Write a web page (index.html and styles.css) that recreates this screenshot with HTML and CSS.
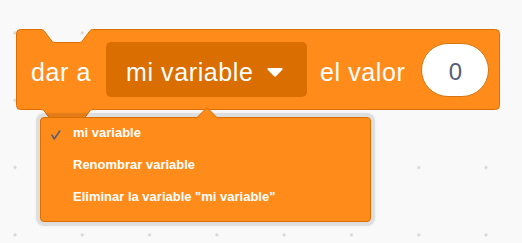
FILE: index.html
```html
<!DOCTYPE html>
<html lang="es">
<head>
<meta charset="utf-8">
<title>Bloque dar a</title>
<link rel="stylesheet" href="styles.css">
</head>
<body>
<div class="workspace">
  <div class="block">
    <svg class="block-shape" width="484" height="100" viewBox="0 0 484 100">
      <path d="M0.5 4.5 A4 4 0 0 1 4.5 0.5 H25 C27 0.5 28 1.5 29 3 L35 11 C36 12.5 37 13.5 39 13.5 H63 C65 13.5 66 12.5 67 11 L73 3 C74 1.5 75 0.5 77 0.5 H479.5 A4 4 0 0 1 483.5 4.5 V76.5 A4 4 0 0 1 479.5 80.5 H77 C75 80.5 74 81.5 73 83 L67 91 C66 92.5 65 93.5 63 93.5 H39 C37 93.5 36 92.5 35 91 L29 83 C28 81.5 27 80.5 25 80.5 H4.5 A4 4 0 0 1 0.5 76.5 Z"/>
    </svg>
    <span class="label">dar a</span>
    <div class="dropdown">
      <span class="dd-text">mi variable</span>
      <svg class="dd-arrow" width="16" height="10" viewBox="0 0 16 10"><path d="M1.5 1 H14.5 C15.6 1 16 2 15.3 2.8 L9.2 9 C8.5 9.7 7.5 9.7 6.8 9 L0.7 2.8 C0 2 0.4 1 1.5 1 Z"/></svg>
    </div>
    <span class="label label-gap">el valor</span>
    <div class="num-input"><span class="num">0</span></div>
  </div>
  <div class="menu">
    <div class="menu-arrow"></div>
    <div class="item"><svg class="check" width="10" height="10" viewBox="0 0 10 10"><path d="M1 5.2 L3.2 9 L8.8 1"/></svg><span>mi variable</span></div>
    <div class="item"><span>Renombrar variable</span></div>
    <div class="item"><span>Eliminar la variable "mi variable"</span></div>
  </div>
</div>
</body>
</html>
```
FILE: styles.css
```css
html, body {
  margin: 0;
  padding: 0;
}

body {
  width: 522px;
  height: 243px;
  overflow: hidden;
  background-color: #f9f9f9;
  background-image: radial-gradient(circle, #d6d6d6 1.2px, rgba(214,214,214,0) 1.9px);
  background-size: 67.3px 67.3px;
  background-position: -18.7px -0.7px;
  font-family: "Liberation Sans", Arial, Helvetica, sans-serif;
}

.workspace {
  position: relative;
  box-sizing: border-box;
  height: 243px;
  padding: 29px 0 0 16px;
}

.block {
  position: relative;
  z-index: 1;
  box-sizing: border-box;
  width: 484px;
  height: 81px;
  display: flex;
  align-items: center;
  padding-left: 15px;
}

.block-shape {
  position: absolute;
  left: 0;
  top: 0;
  z-index: -1;
  overflow: visible;
}

.block-shape path {
  fill: #ff8c1a;
  stroke: #db6e00;
  stroke-width: 1;
}

.label {
  color: #ffffff;
  font-size: 25px;
  letter-spacing: 0.6px;
  padding-top: 6px;
  white-space: nowrap;
}

.label-gap {
  margin-left: 13px;
}

.dropdown {
  box-sizing: border-box;
  width: 201px;
  height: 55px;
  margin-left: 15px;
  background: #db6e00;
  border-radius: 5px;
  display: flex;
  align-items: center;
  padding-left: 20px;
}

.dd-text {
  color: #ffffff;
  font-size: 25px;
  letter-spacing: 0.6px;
  padding-top: 6px;
  white-space: nowrap;
}

.dd-arrow {
  margin-left: 14px;
  margin-top: 5px;
}

.dd-arrow path {
  fill: #ffffff;
}

.num-input {
  box-sizing: border-box;
  width: 68px;
  height: 54px;
  margin-left: 16px;
  background: #ffffff;
  border: 1px solid #d47512;
  border-radius: 27px;
  display: flex;
  align-items: center;
  justify-content: center;
}

.num {
  color: #575e75;
  font-size: 24px;
  padding-top: 5px;
}

.menu {
  position: absolute;
  z-index: 2;
  left: 40px;
  top: 117px;
  box-sizing: border-box;
  width: 331px;
  height: 105px;
  background: #ff8c1a;
  border: 1px solid #db6e00;
  border-radius: 4px;
  box-shadow: 0 0 0 4px rgba(0,0,0,0.08), 0 0 2px 5px rgba(0,0,0,0.03);
  padding-bottom: 7px;
}

.menu-arrow {
  position: absolute;
  left: 158px;
  top: -8px;
  box-sizing: border-box;
  width: 16px;
  height: 16px;
  background: #ff8c1a;
  border-top: 1px solid #db6e00;
  border-left: 1px solid #db6e00;
  border-top-left-radius: 2px;
  transform: rotate(45deg);
}

.item {
  position: relative;
  height: 32px;
  line-height: 29px;
  padding-left: 32px;
  color: #ffffff;
  font-size: 13px;
  font-weight: bold;
  white-space: nowrap;
}

.check {
  position: absolute;
  left: 10px;
  top: 12px;
}

.check path {
  fill: none;
  stroke: #575e75;
  stroke-width: 1.6;
  stroke-linecap: round;
  stroke-linejoin: round;
}
```
